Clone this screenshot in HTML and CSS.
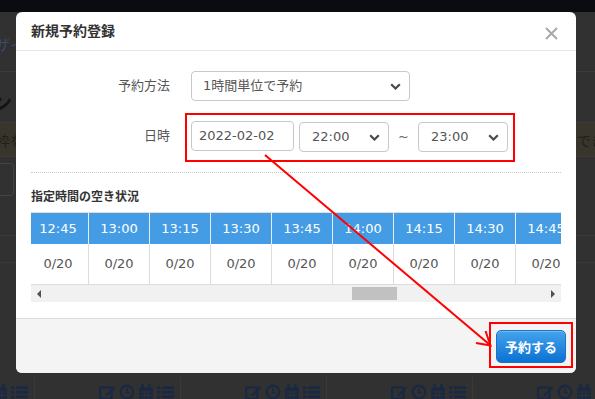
FILE: index.html
```html
<!DOCTYPE html>
<html lang="ja">
<head>
<meta charset="utf-8">
<title>新規予約登録</title>
<link rel="stylesheet" href="styles.css">
</head>
<body>
<div class="page">
  <div class="topbar"></div>
  <div class="nav"><span class="nav-text">ザイ</span></div>
  <div class="page-title">ン</div>
  <div class="notice"><span>枠を</span><span>でき</span></div>
  <div class="outline-box"></div>
  <div class="line-a"></div>
  <div class="line-b"></div>
  <div class="icon-cols">
    <div class="icol"><div class="icons">
      <svg width="17" height="16" viewBox="0 0 15 14"><rect x="1" y="3" width="10" height="10" rx="1" fill="none" stroke="currentColor" stroke-width="2"/><path d="M6 9l7-7 1.5 1.5-7 7H6z" fill="currentColor"/></svg>
      <svg width="16" height="16" viewBox="0 0 14 14"><circle cx="7" cy="7" r="5.5" fill="none" stroke="currentColor" stroke-width="2"/><path d="M7 4v3.5h2.5" fill="none" stroke="currentColor" stroke-width="1.6"/></svg>
      <svg width="16" height="16" viewBox="0 0 14 14"><rect x="1" y="3" width="12" height="10" fill="currentColor"/><rect x="3" y="0" width="2" height="4" fill="currentColor"/><rect x="9" y="0" width="2" height="4" fill="currentColor"/><path d="M2.5 7h9M2.5 10h9M5.5 6v6M8.5 6v6" stroke="#313131" stroke-width="1"/></svg>
      <svg width="17" height="16" viewBox="0 0 15 14"><rect x="0" y="2" width="3" height="2.5" fill="currentColor"/><rect x="4.5" y="2" width="10.5" height="2.5" fill="currentColor"/><rect x="0" y="6" width="3" height="2.5" fill="currentColor"/><rect x="4.5" y="6" width="10.5" height="2.5" fill="currentColor"/><rect x="0" y="10" width="3" height="2.5" fill="currentColor"/><rect x="4.5" y="10" width="10.5" height="2.5" fill="currentColor"/></svg>
    </div></div>
    <div class="icol"><div class="icons">
      <svg width="17" height="16" viewBox="0 0 15 14"><rect x="1" y="3" width="10" height="10" rx="1" fill="none" stroke="currentColor" stroke-width="2"/><path d="M6 9l7-7 1.5 1.5-7 7H6z" fill="currentColor"/></svg>
      <svg width="16" height="16" viewBox="0 0 14 14"><circle cx="7" cy="7" r="5.5" fill="none" stroke="currentColor" stroke-width="2"/><path d="M7 4v3.5h2.5" fill="none" stroke="currentColor" stroke-width="1.6"/></svg>
      <svg width="16" height="16" viewBox="0 0 14 14"><rect x="1" y="3" width="12" height="10" fill="currentColor"/><rect x="3" y="0" width="2" height="4" fill="currentColor"/><rect x="9" y="0" width="2" height="4" fill="currentColor"/><path d="M2.5 7h9M2.5 10h9M5.5 6v6M8.5 6v6" stroke="#313131" stroke-width="1"/></svg>
      <svg width="17" height="16" viewBox="0 0 15 14"><rect x="0" y="2" width="3" height="2.5" fill="currentColor"/><rect x="4.5" y="2" width="10.5" height="2.5" fill="currentColor"/><rect x="0" y="6" width="3" height="2.5" fill="currentColor"/><rect x="4.5" y="6" width="10.5" height="2.5" fill="currentColor"/><rect x="0" y="10" width="3" height="2.5" fill="currentColor"/><rect x="4.5" y="10" width="10.5" height="2.5" fill="currentColor"/></svg>
    </div></div>
    <div class="icol"><div class="icons">
      <svg width="17" height="16" viewBox="0 0 15 14"><rect x="1" y="3" width="10" height="10" rx="1" fill="none" stroke="currentColor" stroke-width="2"/><path d="M6 9l7-7 1.5 1.5-7 7H6z" fill="currentColor"/></svg>
      <svg width="16" height="16" viewBox="0 0 14 14"><circle cx="7" cy="7" r="5.5" fill="none" stroke="currentColor" stroke-width="2"/><path d="M7 4v3.5h2.5" fill="none" stroke="currentColor" stroke-width="1.6"/></svg>
      <svg width="16" height="16" viewBox="0 0 14 14"><rect x="1" y="3" width="12" height="10" fill="currentColor"/><rect x="3" y="0" width="2" height="4" fill="currentColor"/><rect x="9" y="0" width="2" height="4" fill="currentColor"/><path d="M2.5 7h9M2.5 10h9M5.5 6v6M8.5 6v6" stroke="#313131" stroke-width="1"/></svg>
      <svg width="17" height="16" viewBox="0 0 15 14"><rect x="0" y="2" width="3" height="2.5" fill="currentColor"/><rect x="4.5" y="2" width="10.5" height="2.5" fill="currentColor"/><rect x="0" y="6" width="3" height="2.5" fill="currentColor"/><rect x="4.5" y="6" width="10.5" height="2.5" fill="currentColor"/><rect x="0" y="10" width="3" height="2.5" fill="currentColor"/><rect x="4.5" y="10" width="10.5" height="2.5" fill="currentColor"/></svg>
    </div></div>
    <div class="icol"><div class="icons">
      <svg width="17" height="16" viewBox="0 0 15 14"><rect x="1" y="3" width="10" height="10" rx="1" fill="none" stroke="currentColor" stroke-width="2"/><path d="M6 9l7-7 1.5 1.5-7 7H6z" fill="currentColor"/></svg>
      <svg width="16" height="16" viewBox="0 0 14 14"><circle cx="7" cy="7" r="5.5" fill="none" stroke="currentColor" stroke-width="2"/><path d="M7 4v3.5h2.5" fill="none" stroke="currentColor" stroke-width="1.6"/></svg>
      <svg width="16" height="16" viewBox="0 0 14 14"><rect x="1" y="3" width="12" height="10" fill="currentColor"/><rect x="3" y="0" width="2" height="4" fill="currentColor"/><rect x="9" y="0" width="2" height="4" fill="currentColor"/><path d="M2.5 7h9M2.5 10h9M5.5 6v6M8.5 6v6" stroke="#313131" stroke-width="1"/></svg>
      <svg width="17" height="16" viewBox="0 0 15 14"><rect x="0" y="2" width="3" height="2.5" fill="currentColor"/><rect x="4.5" y="2" width="10.5" height="2.5" fill="currentColor"/><rect x="0" y="6" width="3" height="2.5" fill="currentColor"/><rect x="4.5" y="6" width="10.5" height="2.5" fill="currentColor"/><rect x="0" y="10" width="3" height="2.5" fill="currentColor"/><rect x="4.5" y="10" width="10.5" height="2.5" fill="currentColor"/></svg>
    </div></div>
    <div class="icol"><div class="icons">
      <svg width="17" height="16" viewBox="0 0 15 14"><rect x="1" y="3" width="10" height="10" rx="1" fill="none" stroke="currentColor" stroke-width="2"/><path d="M6 9l7-7 1.5 1.5-7 7H6z" fill="currentColor"/></svg>
      <svg width="16" height="16" viewBox="0 0 14 14"><circle cx="7" cy="7" r="5.5" fill="none" stroke="currentColor" stroke-width="2"/><path d="M7 4v3.5h2.5" fill="none" stroke="currentColor" stroke-width="1.6"/></svg>
      <svg width="16" height="16" viewBox="0 0 14 14"><rect x="1" y="3" width="12" height="10" fill="currentColor"/><rect x="3" y="0" width="2" height="4" fill="currentColor"/><rect x="9" y="0" width="2" height="4" fill="currentColor"/><path d="M2.5 7h9M2.5 10h9M5.5 6v6M8.5 6v6" stroke="#313131" stroke-width="1"/></svg>
      <svg width="17" height="16" viewBox="0 0 15 14"><rect x="0" y="2" width="3" height="2.5" fill="currentColor"/><rect x="4.5" y="2" width="10.5" height="2.5" fill="currentColor"/><rect x="0" y="6" width="3" height="2.5" fill="currentColor"/><rect x="4.5" y="6" width="10.5" height="2.5" fill="currentColor"/><rect x="0" y="10" width="3" height="2.5" fill="currentColor"/><rect x="4.5" y="10" width="10.5" height="2.5" fill="currentColor"/></svg>
    </div></div>
  </div>
</div>

<div class="modal">
  <div class="modal-header">
    <div class="modal-title">新規予約登録</div>
    <svg class="close" width="13" height="13" viewBox="0 0 13 13"><path d="M1 1l11 11M12 1L1 12" stroke="#a8a8a8" stroke-width="2"/></svg>
  </div>
  <div class="modal-body">
    <div class="form-row">
      <div class="label">予約方法</div>
      <div class="select select-method"><span>1時間単位で予約</span>
        <svg class="chev" width="11" height="7" viewBox="0 0 11 7"><path d="M1.2 1.2l4.3 4.3 4.3-4.3" fill="none" stroke="#4a4a4a" stroke-width="2.2"/></svg>
      </div>
    </div>
    <div class="form-row row-time">
      <div class="label">日時</div>
      <div class="date-input">2022-02-02</div>
      <div class="select select-time"><span>22:00</span>
        <svg class="chev" width="11" height="7" viewBox="0 0 11 7"><path d="M1.2 1.2l4.3 4.3 4.3-4.3" fill="none" stroke="#4a4a4a" stroke-width="2.2"/></svg>
      </div>
      <div class="tilde">~</div>
      <div class="select select-time"><span>23:00</span>
        <svg class="chev" width="11" height="7" viewBox="0 0 11 7"><path d="M1.2 1.2l4.3 4.3 4.3-4.3" fill="none" stroke="#4a4a4a" stroke-width="2.2"/></svg>
      </div>
    </div>
    <div class="separator"></div>
    <div class="section-title">指定時間の空き状況</div>
    <div class="table-wrap">
      <div class="slot-table">
        <div class="slot-row head">
          <div class="cell">12:45</div><div class="cell">13:00</div><div class="cell">13:15</div><div class="cell">13:30</div><div class="cell">13:45</div><div class="cell">14:00</div><div class="cell">14:15</div><div class="cell">14:30</div><div class="cell">14:45</div>
        </div>
        <div class="slot-row data">
          <div class="cell">0/20</div><div class="cell">0/20</div><div class="cell">0/20</div><div class="cell">0/20</div><div class="cell">0/20</div><div class="cell">0/20</div><div class="cell">0/20</div><div class="cell">0/20</div><div class="cell">0/20</div>
        </div>
      </div>
      <div class="scrollbar">
        <div class="arrow-left"></div>
        <div class="track"><div class="thumb"></div></div>
        <div class="arrow-right"></div>
      </div>
    </div>
  </div>
  <div class="modal-footer">
    <div class="btn-primary">予約する</div>
  </div>
</div>

<div class="mark mark-time"></div>
<div class="mark mark-btn"></div>
<svg class="arrow" width="595" height="399" viewBox="0 0 595 399">
  <path d="M265 155L489.5 344.5" stroke="#f00" stroke-width="2" fill="none"/>
  <path d="M485.5 331L490.5 345.5L476 343" stroke="#f00" stroke-width="2" fill="none" stroke-linejoin="miter"/>
</svg>
</body>
</html>
```

FILE: styles.css
```css
* { box-sizing: border-box; }
html, body { margin: 0; padding: 0; }
body {
  width: 595px;
  height: 399px;
  overflow: hidden;
  position: relative;
  background: #313131;
  font-family: "DejaVu Sans", "Noto Sans CJK JP", sans-serif;
}

/* ---------- dimmed page beneath ---------- */
.page { width: 595px; height: 399px; overflow: hidden; }
.topbar { height: 12px; background: #0b0c0f; }
.nav {
  height: 60px;
  border-bottom: 1px solid #3b3b3b;
  padding-top: 22px;
  padding-left: 0;
}
.nav-text {
  display: block;
  margin-left: -4px;
  font-family: "Noto Sans CJK JP", sans-serif;
  font-size: 14px;
  line-height: 20px;
  color: #3a4c70;
}
.page-title {
  height: 50px;
  padding-top: 20px;
  margin-left: -8px;
  font-family: "Noto Sans CJK JP", sans-serif;
  font-size: 20px;
  line-height: 22px;
  font-weight: 700;
  color: #141414;
}
.notice {
  height: 35px;
  background: #38352d;
  border-top: 1px solid #3e3a31;
  border-bottom: 1px solid #3e3a31;
  display: flex;
  justify-content: space-between;
  align-items: center;
  margin: 0 -10px 0 -4px;
  font-family: "Noto Sans CJK JP", sans-serif;
  font-size: 14px;
  line-height: 18px;
  color: #221f16;
}
.outline-box {
  height: 33px;
  width: 14px;
  margin-top: 6px;
  border: 1px solid #444;
  border-left: none;
  border-radius: 0 4px 4px 0;
}
.line-a { height: 1px; background: #3a3a3a; margin-top: 39px; }
.line-b { height: 1px; background: #3a3a3a; margin-top: 26px; }
.icon-cols {
  display: flex;
  margin-top: 114px;
  margin-left: -111px;
  height: 40px;
}
.icol {
  flex: 0 0 146px;
  border-right: 1px solid #3a3a3a;
  display: flex;
  justify-content: flex-end;
  padding-right: 6px;
  padding-top: 7px;
}
.icons { display: flex; gap: 3px; color: #1a2943; }
.icons svg { display: block; }

/* ---------- modal ---------- */
.modal {
  position: absolute;
  left: 16px;
  top: 12px;
  width: 560px;
  height: 361px;
  background: #fff;
  border-radius: 6px;
  overflow: hidden;
  display: flex;
  flex-direction: column;
}
.modal-header {
  height: 39px;
  flex: 0 0 39px;
  border-bottom: 1px solid #e5e5e5;
  display: flex;
  align-items: center;
  justify-content: space-between;
  padding: 0 18px 0 15px;
}
.modal-title {
  font-family: "Noto Sans CJK JP", sans-serif;
  font-size: 14px;
  line-height: 20px;
  font-weight: 700;
  color: #333;
  margin-top: -2px;
}
.close { display: block; margin-top: 4px; }

.modal-body {
  flex: 1 1 auto;
  padding: 20px 15px 0 15px;
}
.form-row {
  display: flex;
  align-items: center;
  height: 30px;
}
.row-time { margin-top: 20px; }
.label {
  width: 139px;
  margin-right: 21px;
  text-align: right;
  font-family: "Noto Sans CJK JP", sans-serif;
  font-size: 13px;
  line-height: 18px;
  color: #555;
  margin-top: -2px;
}
.select, .date-input {
  height: 30px;
  border: 1px solid #c8c8c8;
  border-radius: 4px;
  display: flex;
  align-items: center;
  font-size: 13px;
  line-height: 18px;
  color: #555;
  background: #fff;
}
.select { justify-content: space-between; padding: 0 8px 0 11px; }
.select-method { width: 219px; }
.select-method span { font-family: "DejaVu Sans", "Noto Sans CJK JP", sans-serif; }
.chev { display: block; flex: 0 0 auto; }
.date-input { width: 103px; padding-left: 7px; color: #555; }
.select-time { width: 90px; padding-left: 12px; margin-top: 2px; }
.date-input + .select-time { margin-left: 5px; }
.tilde {
  width: 29px;
  text-align: center;
  font-size: 13px;
  color: #666;
}
.separator {
  margin-top: 21px;
  border-top: 1px dotted #c8c8c8;
}
.section-title {
  margin-top: 14px;
  font-family: "Noto Sans CJK JP", sans-serif;
  font-size: 12px;
  line-height: 18px;
  font-weight: 700;
  color: #333;
}
.table-wrap {
  margin-top: 7px;
  width: 530px;
  overflow: hidden;
}
.slot-table {
  margin-left: -3px;
  width: 560px;
  border-top: 1px solid #ddd;
}
.slot-row { display: flex; }
.cell {
  flex: 0 0 61px;
  border-right: 1px solid #dcdcdc;
  text-align: center;
  font-size: 13px;
}
.head .cell {
  height: 31px;
  line-height: 31px;
  background: #449de4;
  color: #fff;
  border-right-color: #e6eef8;
}
.data .cell {
  height: 41px;
  line-height: 40px;
  color: #555;
  border-bottom: 1px solid #dcdcdc;
}
.scrollbar {
  height: 17px;
  background: #f1f1f1;
  display: flex;
  align-items: center;
}
.arrow-left {
  width: 0; height: 0;
  margin-left: 6px;
  border-top: 4px solid transparent;
  border-bottom: 4px solid transparent;
  border-right: 4px solid #505050;
}
.arrow-right {
  width: 0; height: 0;
  margin-right: 6px;
  border-top: 4px solid transparent;
  border-bottom: 4px solid transparent;
  border-left: 4px solid #505050;
}
.track { flex: 1 1 auto; height: 13px; padding-left: 311px; }
.thumb { width: 45px; height: 13px; background: #c1c1c1; }

.modal-footer {
  flex: 0 0 55px;
  border-top: 1px solid #dcdcdc;
  background: #f4f4f4;
  display: flex;
  justify-content: flex-end;
  align-items: center;
  padding: 0 10px;
}
.btn-primary {
  width: 70px;
  height: 33px;
  border-radius: 5px;
  border: 1px solid #1b73c4;
  background: linear-gradient(#45a3ec, #0a72d4);
  color: #fff;
  font-family: "Noto Sans CJK JP", sans-serif;
  font-size: 13px;
  font-weight: 700;
  line-height: 31px;
  text-align: center;
  box-shadow: inset 0 1px 0 rgba(255,255,255,0.25);
}

/* ---------- annotations ---------- */
.mark {
  position: absolute;
  border: 2px solid #f00;
}
.mark-time { left: 185px; top: 113px; width: 330px; height: 49px; }
.mark-btn { left: 489px; top: 322px; width: 84px; height: 46px; }
.arrow { position: absolute; left: 0; top: 0; }
```
